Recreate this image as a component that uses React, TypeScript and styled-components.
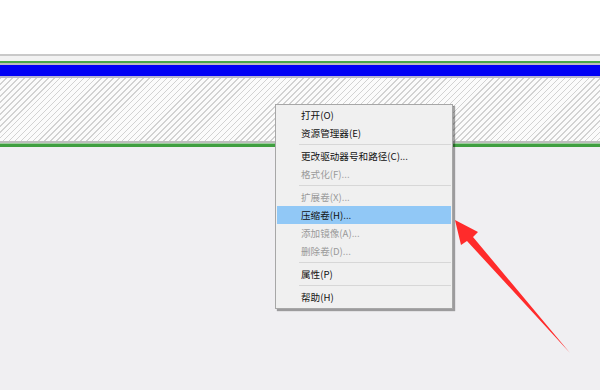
import React from 'react';
import styled, { createGlobalStyle } from 'styled-components';

const GlobalStyle = createGlobalStyle`
    html, body {
        margin: 0;
        padding: 0;
        background: #f0eff2;
    }
    #root {
        width: 600px;
        height: 390px;
        overflow: hidden;
    }
`;

const Page = styled.div`
    position: relative;
    width: 600px;
    height: 390px;
    display: flex;
    flex-direction: column;
    background-color: #f0eff2;
    font-family: "Noto Sans CJK SC", "Noto Sans", sans-serif;
`;

const TopBlank = styled.div`
    height: 54px;
    background-color: #ffffff;
`;

const Line = styled.div<{ $h: number; $color: string }>`
    height: ${props => props.$h}px;
    background-color: ${props => props.$color};
`;

const Hatch = styled.div`
    height: 63px;
    background-color: #fbfbfb;
    background-image: repeating-linear-gradient(
        135deg,
        #d2d2d2 0 1.1px,
        #fbfbfb 1.1px 4.2px
    );
`;

const Rest = styled.div`
    flex: 1;
    background-color: #f0eff2;
`;

const Menu = styled.div`
    position: absolute;
    left: 275px;
    top: 104px;
    width: 176px;
    padding: 1px 0 2px;
    background-color: #f0f0f0;
    border: 1px solid #a7a7a7;
    box-shadow: 2px 2px 1px rgba(0, 0, 0, 0.35);
    display: flex;
    flex-direction: column;
`;

const Item = styled.div<{ $disabled?: boolean; $active?: boolean }>`
    height: 18px;
    margin: 0 1px;
    padding-left: 24px;
    display: flex;
    align-items: center;
    font-size: 9.6px;
    color: ${props => (props.$disabled ? '#9a9a9a' : '#111111')};
    background-color: ${props => (props.$active ? '#91c8f6' : 'transparent')};
`;

const Separator = styled.div`
    height: 1px;
    margin: 2px 1px 2px 23px;
    background-color: #d7d7d7;
`;

const Arrow = styled.svg`
    position: absolute;
    left: 0;
    top: 0;
    pointer-events: none;
`;

type Entry = { label: string; disabled?: boolean; active?: boolean } | 'sep';

const entries: Entry[] = [
    { label: '打开(O)' },
    { label: '资源管理器(E)' },
    'sep',
    { label: '更改驱动器号和路径(C)...' },
    { label: '格式化(F)...', disabled: true },
    'sep',
    { label: '扩展卷(X)...', disabled: true },
    { label: '压缩卷(H)...', active: true },
    { label: '添加镜像(A)...', disabled: true },
    { label: '删除卷(D)...', disabled: true },
    'sep',
    { label: '属性(P)' },
    'sep',
    { label: '帮助(H)' },
];

const App: React.FC = () => {
    return (
        <Page>
            <GlobalStyle />
            <TopBlank />
            <Line $h={2} $color="#c9c9c9" />
            <Line $h={5} $color="#f2f2f2" />
            <Line $h={2} $color="#49a84a" />
            <Line $h={2} $color="#bcbcbc" />
            <Line $h={11} $color="#0000f5" />
            <Line $h={2} $color="#b4b4cf" />
            <Hatch />
            <Line $h={2} $color="#bdbdbd" />
            <Line $h={1} $color="#9ccf9c" />
            <Line $h={3} $color="#3f9f40" />
            <Rest />

            <Menu>
                {entries.map((e, i) =>
                    e === 'sep' ? (
                        <Separator key={i} />
                    ) : (
                        <Item key={i} $disabled={e.disabled} $active={e.active}>
                            {e.label}
                        </Item>
                    )
                )}
            </Menu>

            <Arrow width="600" height="390" viewBox="0 0 600 390">
                <polygon
                    points="455,220 478,232 473,237 570,353 467,241 461,245"
                    fill="#ff2b2b"
                />
            </Arrow>
        </Page>
    );
};

export default App;
